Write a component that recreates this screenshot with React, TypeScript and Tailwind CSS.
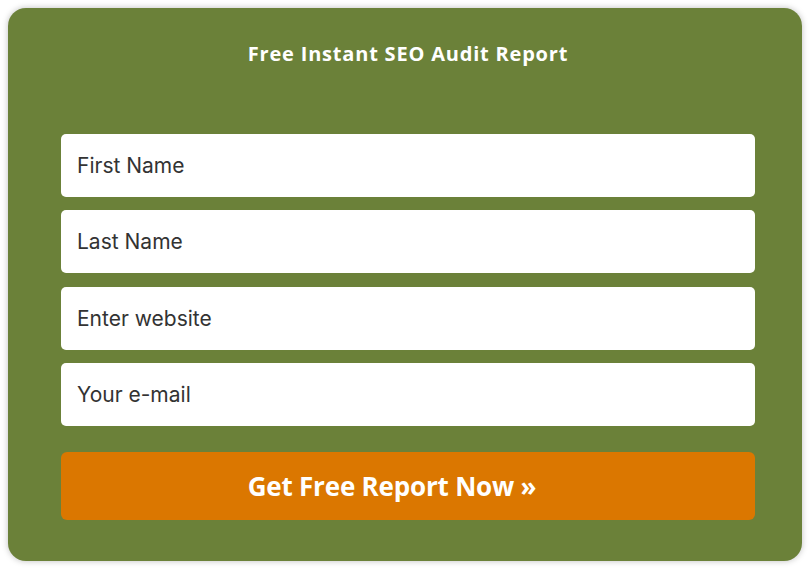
import React from "react";

const fields = ["First Name", "Last Name", "Enter website", "Your e-mail"];

const App = () => {
  return (
    <div className="w-[810px] h-[570px] bg-white p-2 font-['Inter','Liberation_Sans',sans-serif]">
      <form
        className="h-[553px] rounded-[18px] bg-[#6b8139] shadow-[0_0_6px_rgba(0,0,0,0.25)] pl-[53px] pr-[47px] pt-[32px] pb-[41px] flex flex-col"
        onSubmit={(e) => e.preventDefault()}
      >
        <h2 className="text-center text-white font-bold text-[20px] leading-[28px] tracking-[0.8px] font-['Open_Sans',sans-serif]">
          Free Instant SEO Audit Report
        </h2>

        <div className="mt-[66px] flex flex-col gap-[13.4px]">
          {fields.map((f) => (
            <input
              key={f}
              type="text"
              placeholder={f}
              className="h-[63px] w-full rounded-[5px] bg-white px-4 text-[21px] text-[#333] placeholder:text-[#333] outline-none"
            />
          ))}
        </div>

        <button
          type="submit"
          className="mt-[26px] h-[68px] w-full rounded-[6px] bg-[#db7700] pr-[32px] text-white font-bold text-[26px] tracking-[-0.2px] font-['Open_Sans',sans-serif]"
        >
          Get Free Report Now »
        </button>
      </form>
    </div>
  );
};

export default App;
